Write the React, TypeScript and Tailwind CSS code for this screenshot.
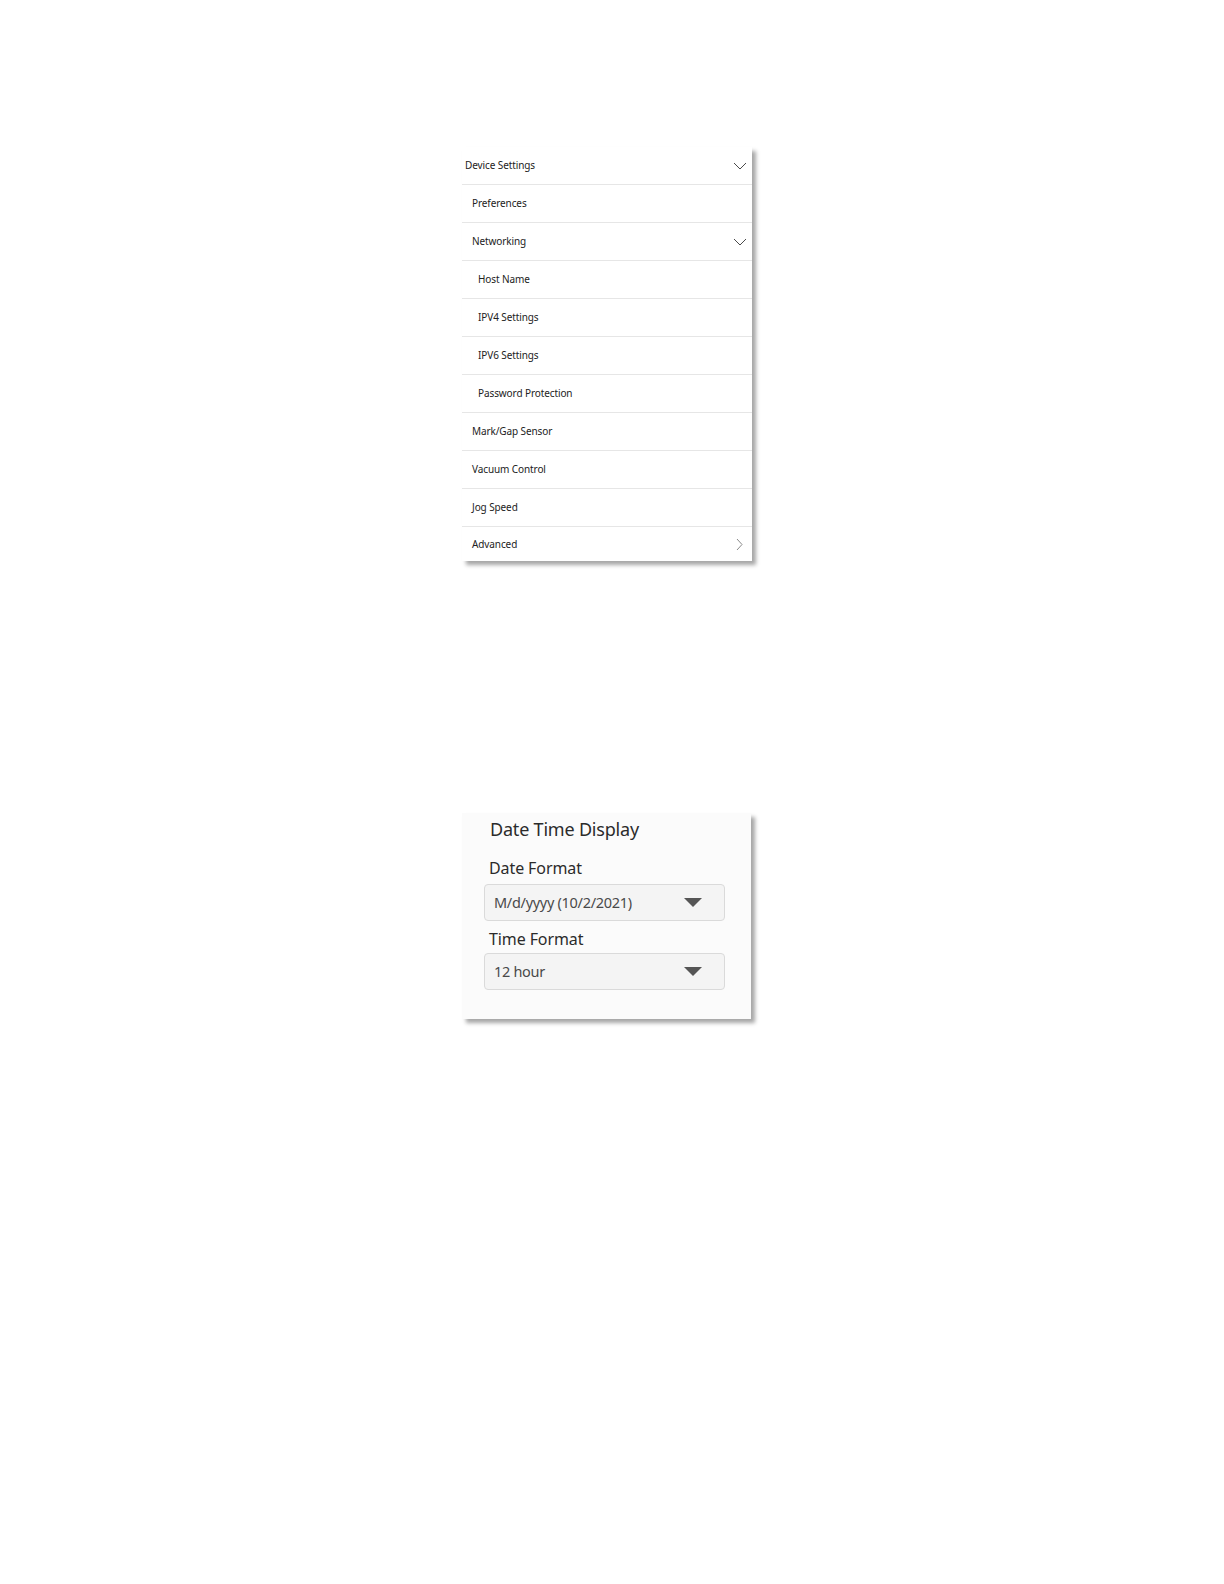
import React from 'react'

type Item = {
  label: string
  level: 0 | 1 | 2
  icon?: 'down' | 'right'
}

const ITEMS: Item[] = [
  { label: 'Device Settings', level: 0, icon: 'down' },
  { label: 'Preferences', level: 1 },
  { label: 'Networking', level: 1, icon: 'down' },
  { label: 'Host Name', level: 2 },
  { label: 'IPV4 Settings', level: 2 },
  { label: 'IPV6 Settings', level: 2 },
  { label: 'Password Protection', level: 2 },
  { label: 'Mark/Gap Sensor', level: 1 },
  { label: 'Vacuum Control', level: 1 },
  { label: 'Jog Speed', level: 1 },
  { label: 'Advanced', level: 1, icon: 'right' },
]

const PAD: Record<number, string> = {
  0: 'pl-[3px]',
  1: 'pl-[10px]',
  2: 'pl-[16px]',
}

function ChevronDown() {
  return (
    <svg width="14" height="8" viewBox="0 0 14 8" fill="none">
      <path d="M1 1l6 6 6-6" stroke="#4a4a4a" strokeWidth="1" />
    </svg>
  )
}

function ChevronRight() {
  return (
    <svg width="7" height="13" viewBox="0 0 7 13" fill="none">
      <path d="M1 1l5 5.5L1 12" stroke="#8a8a8a" strokeWidth="1" />
    </svg>
  )
}

function Caret() {
  return (
    <svg width="18" height="9" viewBox="0 0 18 9">
      <path d="M0 0h18L9 9z" fill="#555" />
    </svg>
  )
}

function Select({ value }: { value: string }) {
  return (
    <div className="flex h-[37px] w-[241px] items-center justify-between rounded-[4px] border border-[#dadada] bg-[#f4f4f4] pl-[9px] pr-[22px]">
      <span className="text-[14.5px] tracking-[-0.3px] text-[#4a4a4a]">{value}</span>
      <Caret />
    </div>
  )
}

export default function App() {
  return (
    <div
      className="min-h-[1584px] w-full bg-white"
      style={{ fontFamily: '"Noto Sans", "Open Sans", sans-serif' }}
    >
      <div className="flex flex-col pl-[462px] pt-[147px]">
        {/* Settings navigation */}
        <div className="w-[290px] bg-white shadow-[4px_4px_4px_rgba(0,0,0,0.35)]">
          {ITEMS.map((item, i) => {
            const last = i === ITEMS.length - 1
            return (
              <div
                key={item.label}
                className={`flex items-center justify-between pr-[5px] ${PAD[item.level]} ${
                  last ? 'h-[34px]' : 'h-[38px] border-b border-[#e6e6e6]'
                }`}
              >
                <span className="text-[10px] tracking-[-0.1px] text-[#222]">{item.label}</span>
                {item.icon === 'down' && <ChevronDown />}
                {item.icon === 'right' && (
                  <span className="pr-[4px]">
                    <ChevronRight />
                  </span>
                )}
              </div>
            )
          })}
        </div>

        {/* Date time display */}
        <div className="mt-[252px] flex h-[206px] w-[289px] flex-col bg-[#fbfbfb] pl-[22px] pt-[2px] shadow-[4px_4px_4px_rgba(0,0,0,0.35)]">
          <div className="pl-[6px] text-[18px] leading-[28px] tracking-[-0.2px] text-[#2b2b2b]">Date Time Display</div>
          <div className="mt-[14px] pl-[5px] text-[16px] leading-[22px] tracking-[-0.1px] text-[#2b2b2b]">Date Format</div>
          <div className="mt-[5px]">
            <Select value="M/d/yyyy (10/2/2021)" />
          </div>
          <div className="mt-[6px] pl-[5px] text-[16px] leading-[24px] tracking-[-0.1px] text-[#2b2b2b]">Time Format</div>
          <div className="mt-[2px]">
            <Select value="12 hour" />
          </div>
        </div>
      </div>
    </div>
  )
}
